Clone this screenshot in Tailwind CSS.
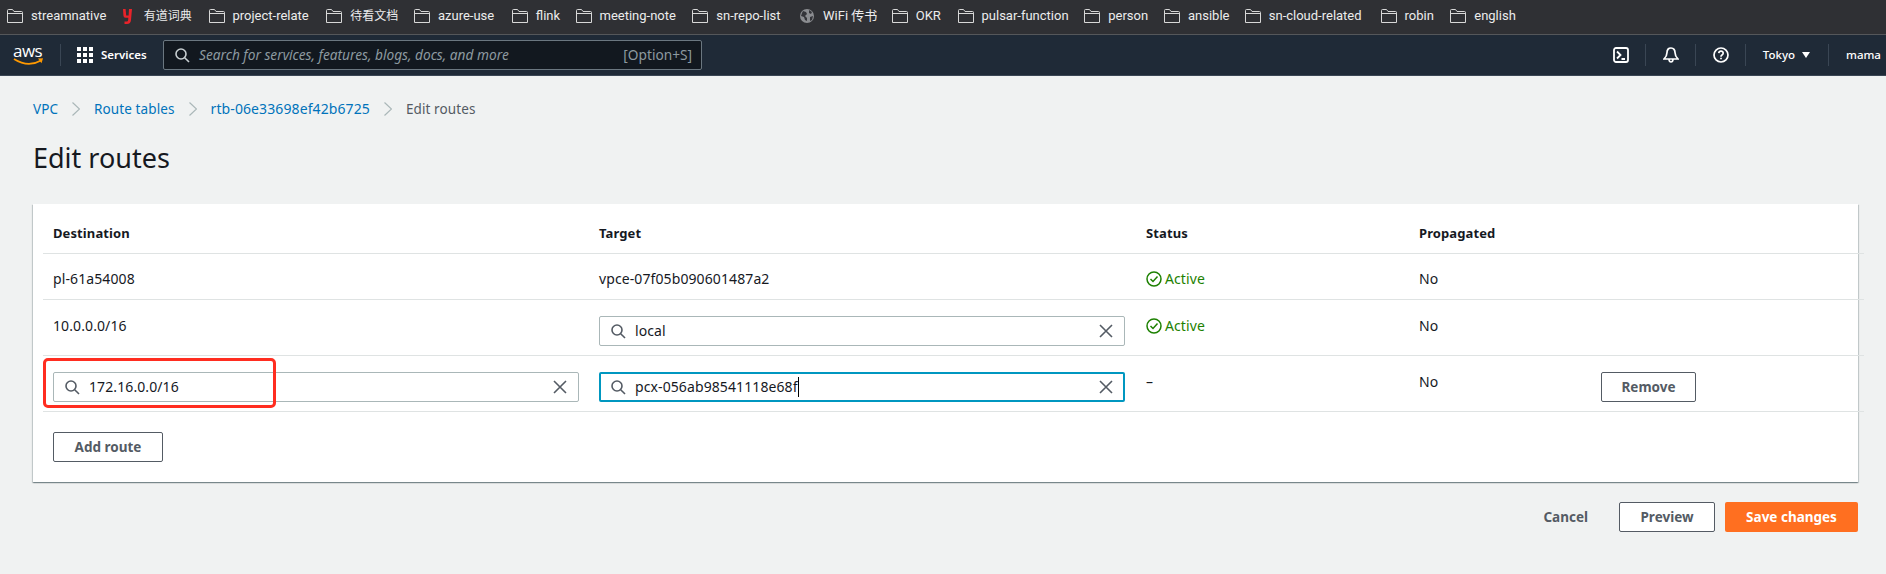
<!DOCTYPE html>
<html lang="en">
  <head>
    <meta charset="UTF-8" />
    <title>Edit routes</title>
    <script src="https://cdn.jsdelivr.net/npm/@tailwindcss/browser@4"></script>
  </head>
  <body class="bg-[#f0f2f2] h-[574px] overflow-hidden font-['Noto_Sans','Noto_Sans_CJK_SC',sans-serif] text-[14px] leading-5 tracking-[0.1px] text-[#16191f]">
    <!--Bookmarks bar-->
    <div class="h-[35px] bg-[#2f3034] border-b border-[#55575a] flex items-center pl-[7px] pb-[2px] gap-[16.75px] text-[13px] tracking-normal whitespace-nowrap text-[#ececec] font-['Roboto','Noto_Sans_CJK_SC',sans-serif]">
      <div class="flex items-center gap-2"><svg class="w-4 h-[14px]" viewBox="0 0 16 14" fill="none" stroke="#d8d8d8"><path d="M.5 13.5V1.5q0-1 1-1h4l1.5 2h7.5q1 0 1 1v10z M.5 4.5h15"/></svg><span class="w-[73px]">streamnative</span></div>
      <div class="flex items-center gap-3"><svg class="w-[9px] h-[15px] ml-[2px]" viewBox="0 0 9 15" fill="#e8232a"><path d="M0 0h2.6l.6 6.5h2.4L6 0h3L8 11q-.3 4-4 4H1.500v-2.400H3.500q1.600 0 1.700-1.600l.1-2.300H2.500Q.5 8.700.4 6.500z"/></svg><span class="w-[48px] text-[12px]">有道词典</span></div>
      <div class="flex items-center gap-2"><svg class="w-4 h-[14px]" viewBox="0 0 16 14" fill="none" stroke="#d8d8d8"><path d="M.5 13.5V1.5q0-1 1-1h4l1.500 2h7.500q1 0 1 1v10z M.5 4.500h15"/></svg><span class="w-[77px]">project-relate</span></div>
      <div class="flex items-center gap-2"><svg class="w-4 h-[14px]" viewBox="0 0 16 14" fill="none" stroke="#d8d8d8"><path d="M.5 13.5V1.5q0-1 1-1h4l1.500 2h7.500q1 0 1 1v10z M.5 4.500h15"/></svg><span class="w-[47px] text-[12px]">待看文档</span></div>
      <div class="flex items-center gap-2"><svg class="w-4 h-[14px]" viewBox="0 0 16 14" fill="none" stroke="#d8d8d8"><path d="M.5 13.5V1.5q0-1 1-1h4l1.500 2h7.500q1 0 1 1v10z M.5 4.500h15"/></svg><span class="w-[57px]">azure-use</span></div>
      <div class="flex items-center gap-2"><svg class="w-4 h-[14px]" viewBox="0 0 16 14" fill="none" stroke="#d8d8d8"><path d="M.5 13.5V1.5q0-1 1-1h4l1.500 2h7.500q1 0 1 1v10z M.5 4.500h15"/></svg><span class="w-[23px]">flink</span></div>
      <div class="flex items-center gap-2"><svg class="w-4 h-[14px]" viewBox="0 0 16 14" fill="none" stroke="#d8d8d8"><path d="M.5 13.5V1.5q0-1 1-1h4l1.500 2h7.500q1 0 1 1v10z M.5 4.500h15"/></svg><span class="w-[76px]">meeting-note</span></div>
      <div class="flex items-center gap-2"><svg class="w-4 h-[14px]" viewBox="0 0 16 14" fill="none" stroke="#d8d8d8"><path d="M.5 13.5V1.5q0-1 1-1h4l1.500 2h7.500q1 0 1 1v10z M.5 4.500h15"/></svg><span class="w-[66px]">sn-repo-list</span></div>
      <div class="flex items-center gap-[9px] ml-px"><svg class="w-[14px] h-[14px]" viewBox="0 0 14 14"><circle cx="7" cy="7" r="7" fill="#8b8d91"/><path d="M3 2l3 1 1 2-2 2 2 2v3l-2-1-1-3-3-1 1-3zM9 1l3 2-1 2-2-1zM10 8l3-1-1 4-2 1z" fill="#34353a"/></svg><span class="w-[52px]">WiFi 传书</span></div>
      <div class="flex items-center gap-2"><svg class="w-4 h-[14px]" viewBox="0 0 16 14" fill="none" stroke="#d8d8d8"><path d="M.5 13.5V1.5q0-1 1-1h4l1.500 2h7.500q1 0 1 1v10z M.5 4.500h15"/></svg><span class="w-[25px]">OKR</span></div>
      <div class="flex items-center gap-2"><svg class="w-4 h-[14px]" viewBox="0 0 16 14" fill="none" stroke="#d8d8d8"><path d="M.5 13.5V1.5q0-1 1-1h4l1.500 2h7.500q1 0 1 1v10z M.5 4.500h15"/></svg><span class="w-[86px]">pulsar-function</span></div>
      <div class="flex items-center gap-2"><svg class="w-4 h-[14px]" viewBox="0 0 16 14" fill="none" stroke="#d8d8d8"><path d="M.5 13.5V1.5q0-1 1-1h4l1.500 2h7.500q1 0 1 1v10z M.5 4.500h15"/></svg><span class="w-[39px]">person</span></div>
      <div class="flex items-center gap-2"><svg class="w-4 h-[14px]" viewBox="0 0 16 14" fill="none" stroke="#d8d8d8"><path d="M.5 13.5V1.5q0-1 1-1h4l1.500 2h7.500q1 0 1 1v10z M.5 4.500h15"/></svg><span class="w-[40px]">ansible</span></div>
      <div class="flex items-center gap-2"><svg class="w-4 h-[14px]" viewBox="0 0 16 14" fill="none" stroke="#d8d8d8"><path d="M.5 13.5V1.5q0-1 1-1h4l1.500 2h7.500q1 0 1 1v10z M.5 4.500h15"/></svg><span class="w-[95px]">sn-cloud-related</span></div>
      <div class="flex items-center gap-2"><svg class="w-4 h-[14px]" viewBox="0 0 16 14" fill="none" stroke="#d8d8d8"><path d="M.5 13.5V1.5q0-1 1-1h4l1.500 2h7.500q1 0 1 1v10z M.5 4.500h15"/></svg><span class="w-[29px]">robin</span></div>
      <div class="flex items-center gap-2"><svg class="w-4 h-[14px]" viewBox="0 0 16 14" fill="none" stroke="#d8d8d8"><path d="M.5 13.5V1.5q0-1 1-1h4l1.500 2h7.500q1 0 1 1v10z M.5 4.500h15"/></svg><span class="w-[41px]">english</span></div>
    </div>

    <!--AWS nav-->
    <nav class="h-[41px] bg-[#1f2a37] border-b border-[#3a4654] flex items-center text-white tracking-normal">
      <div class="w-[60px] h-[22px] flex flex-col items-center">
        <span class="font-['Open_Sans',sans-serif] text-[17px] leading-[14px] w-[30px] ml-[-4px] tracking-[-0.5px]">aws</span>
        <svg class="w-[31px] h-[8px] ml-[-3px]" viewBox="0 0 31 8" fill="none"><path d="M1 1q14 9 27 1.500" stroke="#f90" stroke-width="1.800"/><path d="M25 .5l5-.3-1.500 5z" fill="#f90"/></svg>
      </div>
      <div class="w-px h-[22px] bg-[#3a4654]"></div>
      <svg class="ml-4 w-4 h-4" viewBox="0 0 16 16" fill="#fff"><path d="M0 0h4v4H0zM6 0h4v4H6zM12 0h4v4h-4zM0 6h4v4H0zM6 6h4v4H6zM12 6h4v4h-4zM0 12h4v4H0zM6 12h4v4H6zM12 12h4v4h-4z"/></svg>
      <span class="ml-2 w-[45px] text-[11.5px] font-semibold">Services</span>
      <div class="ml-[17px] w-[539px] h-[30px] bg-[#12181f] border border-[#6b7780] rounded-[2px] flex items-center pl-[11px] pr-[9px] text-[13.7px] text-[#8d9aa0]">
        <svg class="w-[15px] h-[15px]" viewBox="0 0 15 15" fill="none" stroke="#c8cfd2" stroke-width="1.600"><circle cx="6" cy="6" r="5"/><path d="M9.700 9.700L14 14"/></svg>
        <span class="ml-[9px] italic">Search for services, features, blogs, docs, and more</span>
        <span class="ml-auto">[Option+S]</span>
      </div>
      <div class="ml-auto flex items-center h-[22px]">
        <svg class="w-4 h-4" viewBox="0 0 16 16" fill="none" stroke="#fff" stroke-width="1.800"><rect x="1" y="1" width="14" height="14" rx="2"/><path d="M4 4.500L7.500 8 4 11.500M8.500 12H12"/></svg>
        <div class="w-px h-[22px] ml-4 bg-[#3a4654]"></div>
        <svg class="w-4 h-4 ml-[17px]" viewBox="0 0 16 16" fill="none" stroke="#fff" stroke-width="1.700"><path d="M8 1c-2.800 0-4 2.200-4 4.500 0 3-1 4.500-3 6.500h14c-2-2-3-3.500-3-6.500C12 3.200 10.800 1 8 1zM6 12.500q.3 2.500 2 2.500t2-2.500"/></svg>
        <div class="w-px h-[22px] ml-4 bg-[#3a4654]"></div>
        <svg class="w-4 h-4 ml-[17px]" viewBox="0 0 16 16" fill="none" stroke="#fff" stroke-width="1.700"><circle cx="8" cy="8" r="7"/><path d="M5.800 6.200Q6 4.200 8 4.200t2.200 1.800Q10.200 7.200 9 7.900 8 8.500 8 9.700M8 10.800v1.400"/></svg>
        <div class="w-px h-[22px] ml-4 bg-[#3a4654]"></div>
        <span class="ml-[17px] text-[11.5px] font-medium">Tokyo</span>
        <svg class="w-2 h-[6px] ml-[7px]" viewBox="0 0 8 6" fill="#fff"><path d="M0 0h8L4 6z"/></svg>
        <div class="w-px h-[22px] ml-[18px] bg-[#3a4654]"></div>
        <span class="ml-[17px] w-[40px] text-[11.500px] font-medium">mama</span>
      </div>
    </nav>

    <main class="pl-[33px] pr-[28px]">
      <!--Breadcrumb-->
      <div class="pt-[23px] h-[53px] flex items-center gap-[14px] text-[#0073bb] text-[13.500px] pb-[10px]">
        <span>VPC</span>
        <svg class="w-2 h-[14px]" viewBox="0 0 8 14" fill="none" stroke="#aab7b8" stroke-width="1.200"><path d="M.5.5L7.500 7 .5 13.500"/></svg>
        <span>Route tables</span>
        <svg class="w-2 h-[14px]" viewBox="0 0 8 14" fill="none" stroke="#aab7b8" stroke-width="1.200"><path d="M.5.5L7.500 7 .5 13.500"/></svg>
        <span class="text-[14px]">rtb-06e33698ef42b6725</span>
        <svg class="w-2 h-[14px]" viewBox="0 0 8 14" fill="none" stroke="#aab7b8" stroke-width="1.200"><path d="M.5.5L7.500 7 .5 13.500"/></svg>
        <span class="text-[#545b64]">Edit routes</span>
      </div>
      <h1 class="text-[27px] leading-[36px] mt-[11px] font-normal tracking-normal">Edit routes</h1>

      <!--Routes card-->
      <div class="relative mt-[28px] h-[278px] bg-white shadow-[0_1px_1px_0_rgba(0,28,36,0.3),1px_1px_1px_0_rgba(0,28,36,0.15),-1px_1px_1px_0_rgba(0,28,36,0.15)]">
        <div class="ml-[10px] -mr-[6px]">
          <div class="h-[50px] grid grid-cols-[546px_547px_273px_182px_1fr] pl-[10px] pt-[19px] border-b border-[#dfe3e3] font-bold text-[13px]">
            <div>Destination</div>
            <div>Target</div>
            <div>Status</div>
            <div>Propagated</div>
          </div>
          <div class="h-[46px] grid grid-cols-[546px_547px_273px_182px_1fr] pl-[10px] pt-[15px] border-b border-[#dfe3e3]">
            <div>pl-61a54008</div>
            <div>vpce-07f05b090601487a2</div>
            <div class="flex items-center gap-[3px] h-5 text-[#1d8102]">
              <svg class="w-4 h-4" viewBox="0 0 16 16" fill="none" stroke="#1d8102" stroke-width="1.500"><circle cx="8" cy="8" r="7"/><path d="M4.500 8l2.500 2.500 4.500-5"/></svg>
              <span>Active</span>
            </div>
            <div>No</div>
          </div>
          <div class="h-[56px] grid grid-cols-[546px_547px_273px_182px_1fr] pl-[10px] pt-4 border-b border-[#dfe3e3]">
            <div>10.0.0.0/16</div>
            <div class="w-[526px] h-[30px] bg-white border border-[#aab7b8] rounded-[2px] flex items-center pl-[11px] pr-[11px]">
              <svg class="w-[15px] h-[15px]" viewBox="0 0 15 15" fill="none" stroke="#545b64" stroke-width="1.600"><circle cx="6" cy="6" r="5"/><path d="M9.700 9.700L14 14"/></svg>
              <span class="ml-[9px]">local</span>
              <svg class="ml-auto w-[14px] h-[14px]" viewBox="0 0 14 14" fill="none" stroke="#545b64" stroke-width="1.600"><path d="M1 1l12 12M13 1L1 13"/></svg>
            </div>
            <div class="flex items-center gap-[3px] h-5 text-[#1d8102]">
              <svg class="w-4 h-4" viewBox="0 0 16 16" fill="none" stroke="#1d8102" stroke-width="1.500"><circle cx="8" cy="8" r="7"/><path d="M4.500 8l2.500 2.500 4.500-5"/></svg>
              <span>Active</span>
            </div>
            <div>No</div>
          </div>
          <div class="h-[56px] grid grid-cols-[546px_547px_273px_182px_1fr] pl-[10px] pt-4 border-b border-[#dfe3e3]">
            <div class="w-[526px] h-[30px] bg-white border border-[#aab7b8] rounded-[2px] flex items-center pl-[11px] pr-[11px]">
              <svg class="w-[15px] h-[15px]" viewBox="0 0 15 15" fill="none" stroke="#545b64" stroke-width="1.600"><circle cx="6" cy="6" r="5"/><path d="M9.700 9.700L14 14"/></svg>
              <span class="ml-[9px]">172.16.0.0/16</span>
              <svg class="ml-auto w-[14px] h-[14px]" viewBox="0 0 14 14" fill="none" stroke="#545b64" stroke-width="1.600"><path d="M1 1l12 12M13 1L1 13"/></svg>
            </div>
            <div class="w-[526px] h-[30px] bg-white border-2 border-[#0097c0] rounded-[2px] flex items-center pl-[10px] pr-[10px]">
              <svg class="w-[15px] h-[15px]" viewBox="0 0 15 15" fill="none" stroke="#545b64" stroke-width="1.600"><circle cx="6" cy="6" r="5"/><path d="M9.700 9.700L14 14"/></svg>
              <span class="ml-[9px] border-r border-black">pcx-056ab98541118e68f</span>
              <svg class="ml-auto w-[14px] h-[14px]" viewBox="0 0 14 14" fill="none" stroke="#545b64" stroke-width="1.600"><path d="M1 1l12 12M13 1L1 13"/></svg>
            </div>
            <div>–</div>
            <div>No</div>
            <button class="w-[95px] h-[30px] bg-white border border-[#545b64] rounded-[2px] text-[13.500px] font-bold text-[#545b64] tracking-normal">Remove</button>
          </div>
        </div>
        <button class="ml-5 mt-[20px] w-[110px] h-[30px] bg-white border border-[#545b64] rounded-[2px] text-[13.500px] font-bold text-[#545b64] tracking-normal">Add route</button>
        <!--annotation drawn over the screenshot-->
        <div class="absolute left-[10px] top-[154px] w-[233px] h-[50px] border-[3px] border-[#ff2d20] rounded-[5px]"></div>
      </div>

      <!--Actions-->
      <div class="mt-5 flex justify-end items-center text-[13.500px] font-bold text-[#545b64] tracking-normal">
        <span class="mr-[31px]">Cancel</span>
        <button class="w-[96px] h-[30px] bg-white border border-[#545b64] rounded-[2px] font-bold">Preview</button>
        <button class="ml-[10px] w-[133px] h-[30px] bg-[#ff6f20] rounded-[2px] text-white font-bold">Save changes</button>
      </div>
    </main>
  </body>
</html>
